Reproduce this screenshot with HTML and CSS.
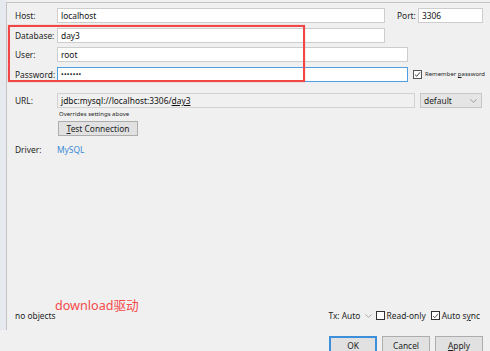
FILE: index.html
```html
<!DOCTYPE html>
<html lang="en">
<head>
    <meta charset="UTF-8">
    <title>Data Source</title>
    <link rel="stylesheet" href="styles.css">
</head>
<body>
    <div class="window">
        <div class="side"></div>
        <div class="panel">
            <div class="form">
                <div class="row">
                    <label class="label">Host:</label>
                    <div class="field w-host">localhost</div>
                    <label class="port-label">Port:</label>
                    <div class="field w-port">3306</div>
                </div>
                <div class="row">
                    <label class="label">Database:</label>
                    <div class="field w-host">day3</div>
                </div>
                <div class="row">
                    <label class="label">User:</label>
                    <div class="field w-user">root</div>
                </div>
                <div class="row">
                    <label class="label">Password:</label>
                    <div class="field w-user focus">&bull;&bull;&bull;&bull;&bull;&bull;&bull;</div>
                    <span class="check small">
                        <svg width="7" height="7" viewBox="0 0 7 7"><path d="M1 3.6 L2.8 5.3 L6 1.3" fill="none" stroke="#333" stroke-width="0.9"/></svg>
                    </span>
                    <span class="tiny-text">Remember <u>p</u>assword</span>
                </div>

                <div class="row url-row">
                    <label class="label">URL:</label>
                    <div class="field w-url disabled">jdbc:mysql://localhost:3306/<u>day3</u></div>
                    <div class="select">default
                        <svg width="7" height="4" viewBox="0 0 7 4"><path d="M0.5 0.5 L3.5 3.3 L6.5 0.5" fill="none" stroke="#8a8a8a" stroke-width="0.8"/></svg>
                    </div>
                </div>
                <div class="hint">Overrides settings above</div>
                <button class="btn test"><u>T</u>est Connection</button>
                <div class="row driver-row">
                    <label class="label">Driver:</label>
                    <a class="link">MySQL</a>
                </div>
            </div>

            <div class="status">
                <span>no objects</span>
                <div class="options">
                    <span class="tx">Tx: Auto
                        <svg width="7" height="4" viewBox="0 0 7 4"><path d="M0.5 0.5 L3.5 3.3 L6.5 0.5" fill="none" stroke="#9a9a9a" stroke-width="0.8"/></svg>
                    </span>
                    <span class="check"></span>
                    <span class="opt">Read-only</span>
                    <span class="check">
                        <svg width="8" height="8" viewBox="0 0 8 8"><path d="M1.2 4.1 L3.2 6 L6.8 1.5" fill="none" stroke="#333" stroke-width="0.9"/></svg>
                    </span>
                    <span class="opt">Auto s<u>y</u>nc</span>
                </div>
            </div>

            <div class="marker"></div>
            <div class="note">download驱动</div>
        </div>
    </div>
    <div class="buttons">
        <button class="btn dialog primary">OK</button>
        <button class="btn dialog">Cancel</button>
        <button class="btn dialog"><u>A</u>pply</button>
    </div>
</body>
</html>
```

FILE: styles.css
```css
body {
    margin: 0;
    width: 490px;
    height: 351px;
    overflow: hidden;
    background-color: #f0f0f0;
    font-family: "Noto Sans", "Noto Sans CJK SC", sans-serif;
    font-size: 8.4px;
    color: #1e1e1e;
}
.window {
    display: flex;
    height: 330px;
}
.side {
    flex-shrink: 0;
    width: 6px;
    background-color: #e6e9ed;
}
.panel {
    position: relative;
    flex: 1;
    min-width: 0;
    display: flex;
    flex-direction: column;
    margin-top: 2px;
    border-top: 1px solid #c4c4c4;
    border-left: 1px solid #c4c4c4;
    padding: 5px 0 0 8px;
}
.row {
    display: flex;
    align-items: center;
    height: 15px;
    margin-bottom: 4.5px;
    white-space: nowrap;
}
.row > * {
    flex-shrink: 0;
}
.label {
    width: 42px;
}
.field {
    box-sizing: border-box;
    height: 15px;
    line-height: 13px;
    padding-left: 3px;
    background-color: #fff;
    border: 1px solid #cdcdcd;
    color: #111;
    white-space: nowrap;
}
.w-host { width: 328px; }
.w-port { width: 65px; }
.w-user { width: 351px; }
.w-url { width: 358px; }
.field.focus {
    border-color: #4f9fe3;
    font-size: 7px;
    letter-spacing: 0.3px;
}
.field.disabled {
    background-color: #f0f0f0;
    border-color: #d2d2d2;
}
.port-label {
    margin-left: 12px;
    width: 21px;
}
.check {
    box-sizing: border-box;
    display: inline-flex;
    align-items: center;
    justify-content: center;
    width: 9px;
    height: 9px;
    background-color: #fff;
    border: 1px solid #333;
}
.check.small {
    margin-left: 5px;
    border-color: #555;
}
.tiny-text {
    margin-left: 3px;
    font-size: 6px;
}
.url-row {
    margin-top: 11.5px;
    margin-bottom: 0;
}
.select {
    box-sizing: border-box;
    display: flex;
    align-items: center;
    justify-content: space-between;
    width: 62px;
    height: 15px;
    margin-left: 5px;
    padding: 0 4px 0 3px;
    background-color: #e5e5e5;
    border: 1px solid #c6c6c6;
}
.hint {
    margin: 2px 0 0 44px;
    font-size: 6px;
    line-height: 8px;
}
.btn {
    box-sizing: border-box;
    font-family: "Noto Sans", sans-serif;
    font-size: 8.4px;
    color: #1e1e1e;
    background-color: #e1e1e1;
    border: 1px solid #adadad;
    padding: 0;
}
.test {
    width: 80px;
    height: 15px;
    margin: 3px 0 0 43px;
}
.driver-row {
    margin-top: 6px;
}
.link {
    color: #3a8ad6;
}
.status {
    display: flex;
    align-items: center;
    margin-top: auto;
    margin-bottom: 9px;
    padding-right: 10px;
}
.options {
    display: flex;
    align-items: center;
    margin-left: auto;
}
.tx svg {
    margin: 0 4px 1px 2px;
}
.opt {
    margin: 0 5px 0 2px;
}
.opt:last-child {
    margin-right: 0;
}
.buttons {
    display: flex;
    justify-content: flex-end;
    gap: 5px;
    margin-top: 6px;
    padding-right: 7px;
}
.dialog {
    width: 48px;
    height: 18px;
}
.dialog.primary {
    border: 1px solid #3c8fd8;
    box-shadow: inset 0 0 0 1px #3c8fd8;
}
.marker {
    position: absolute;
    left: 1px;
    top: 22px;
    width: 293px;
    height: 53px;
    border: 2px solid #f24646;
    box-shadow: 0 0 1px rgba(242, 70, 70, 0.6);
}
.note {
    position: absolute;
    left: 48px;
    top: 292px;
    font-size: 12.6px;
    color: #f44a4a;
}
```
